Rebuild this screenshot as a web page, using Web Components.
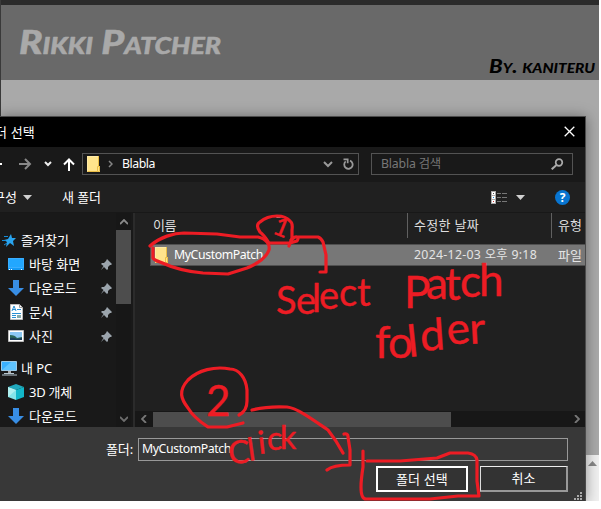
<!DOCTYPE html>
<html lang="ko"><head><meta charset="utf-8"><title>Rikki Patcher</title>
<style>
html,body{margin:0;width:601px;height:509px;overflow:hidden;background:#fff}
body{font:13px/18px "Noto Sans","Noto Sans CJK KR",sans-serif;color:#fff}
</style></head><body><patcher-page></patcher-page>
<script>
const define=(name,html,after)=>customElements.define(name,class extends HTMLElement{
  connectedCallback(){
    if(this.shadowRoot)return;
    const t=document.createElement('template');t.innerHTML=html;
    this.attachShadow({mode:'open'}).append(t.content.cloneNode(true));
    if(after)after(this,this.shadowRoot);
  }
});

// Single-line label; "w" is the advance width its letters are spaced to fill.
define('ui-label','<style>:host{display:inline-block;white-space:nowrap;flex:none;padding-bottom:1px}:host([latin]){font-size:12.3px}</style><span><slot></slot></span>',(el,r)=>{
  const w=+el.getAttribute('w');if(!w)return;
  const nat=r.querySelector('span').getBoundingClientRect().width;
  el.style.letterSpacing=((w-nat)/el.textContent.length)+'px';
  el.style.width=w+'px';
});

const icons={
 folder:[13,16,'<path d="M0 0h12v10h1v6H0z" fill="#ffe48c"/><path d="M0 .5h12M.5 0v16" stroke="#ffeaa6" fill="none"/><path d="M.5 15.5h10v-5h2v5h-2M11.5 0v10" stroke="#e9bd46" fill="none"/>'],
 left:[12,12,'<path d="M12 6H1M6 1 1 6l5 5" fill="none" stroke="#fff" stroke-width="2"/>'],
 right:[13,12,'<path d="M0 6h11M6 1l5 5-5 5" fill="none" stroke="#888" stroke-width="2"/>'],
 down:[8,6,'<path d="M1 1l3 3 3-3" fill="none" stroke="#eee" stroke-width="2"/>'],
 downGrey:[10,7,'<path d="M1 1l4 4 4-4" fill="none" stroke="#999" stroke-width="2"/>'],
 up:[12,13,'<path d="M6 13V2M1 6.500 6 1.500l5 5" fill="none" stroke="#fff" stroke-width="2"/>'],
 crumb:[5,8,'<path d="M1 1l3 3-3 3" fill="none" stroke="#858585" stroke-width="1.500"/>'],
 refresh:[11,12,'<path d="M7 2.700a4.200 4.200 0 1 1-4.300.7" fill="none" stroke="#999" stroke-width="1.800"/><path d="M.5 1.300h4.200v4" fill="none" stroke="#999" stroke-width="1.700"/>'],
 search:[13,12,'<circle cx="8" cy="4.500" r="3.300" fill="none" stroke="#aaa" stroke-width="1.700"/><path d="M5.500 7 .7 11.300" stroke="#aaa" stroke-width="2"/>'],
 close:[11,11,'<path d="M.7.700l9.600 9.600m0-9.600L.7 10.300" stroke="#fff" stroke-width="1.300"/>'],
 tri:[9,5,'<path d="M0 0h9L4.500 5z" fill="#d0d0d0"/>'],
 view:[16,13,'<path d="M0 0h5v13H0z" fill="#aaa"/><path d="M1 1h3v3H1zm0 4h3v3H1zm0 4h3v3H1z" fill="#fff"/><path d="M2 2h1v1H2z" fill="#555"/><path d="M2 6h1v1H2z" fill="#198ddd"/><path d="M2 10h1v1H2z" fill="#c33"/><path d="M6 2.500h4m1 0h5M6 6.500h4m1 0h5M6 10.500h4m1 0h5" stroke="#777"/>'],
 star:[14,13,'<path d="M9 0l1 4h4l-3 3 1 5-4-3-4 4 1-5-3-2 4-1z" fill="#29a4ef"/><path d="M2 2.500h4M0 6.500h4M2 11l3-2" stroke="#168bd5"/>'],
 desktop:[16,12,'<path d="M0 0h16v12H0z" fill="#1499f4"/><path d="M.5.500h15v9H.5z" fill="#22a7ff" stroke="#3aaeff"/><path d="M1 11.500h1m1 0h1m9 0h1" stroke="#fff"/>'],
 download:[16,16,'<path d="M5 0h6v8h5l-8 8-8-8h5z" fill="#388ee5"/>'],
 doc:[13,16,'<path d="M.5.500h9l3 3v12H.5z" fill="#fff" stroke="#bbb"/><path d="M9.500.500v3h3" fill="none" stroke="#999"/><path d="M2 7l2-5 2 5M2 5.500h4M7 5.500h4M2 9.500h9M2 11.500h4M2 13.500h4" stroke="#2a8fd3" fill="none"/><path d="M7 11h4v3H7z" fill="#8aa"/>'],
 photo:[16,12,'<path d="M.5.500h15v11H.5z" fill="#fff" stroke="#bbb"/><path d="M2 2h12v8H2z" fill="#8bc8f4"/><path d="M2 5q5 0 7 3l5-1v3H2z" fill="#276455"/><path d="M2 8q4-1 7 1l5-1v2H2z" fill="#1a3c58"/>'],
 pc:[17,15,'<path d="M.5.500h15v9H.5z" fill="#39b0ff" stroke="#9dc9e6"/><path d="M1 9L10 1h5v8z" fill="#5fc4ff"/><path d="M7 10h3v2H7z" fill="#aaa"/><path d="M3 12.500h10M1 14h15" stroke="#b5c6d0"/>'],
 cube:[16,16,'<path d="M0 3l8-3 8 3-8 3z" fill="#20a9bd"/><path d="M0 3l8 3v10l-8-3z" fill="#83e5ea"/><path d="M8 6l8-3v10l-8 3z" fill="#12b7c9"/><path d="M8 6L0 13V3z" fill="#b0f0f0"/>'],
 pin:[11,11,'<path d="M6 0l5 5-1 1H9L7 8v2L6 11 3 8l-3 3 2.500-4L0 5l1-1h2l2-2z" fill="#9ba4ac"/>'],
 sup:[8,6,'<path d="M0 5l4-4 4 4" fill="none" stroke="#8a8a8a" stroke-width="1.800"/>'],
 sdn:[8,6,'<path d="M0 1l4 4 4-4" fill="none" stroke="#6e6e6e" stroke-width="1.800"/>'],
 sl:[6,8,'<path d="M5 0L1 4l4 4" fill="none" stroke="#777" stroke-width="1.800"/>'],
 sr:[6,8,'<path d="M1 0l4 4-4 4" fill="none" stroke="#777" stroke-width="1.800"/>']
};
define('ui-icon','<style>:host{display:inline-flex;flex:none}svg{display:block}</style>',(el,r)=>{
  const [w,h,b]=icons[el.getAttribute('name')];
  r.innerHTML+=`<svg width="${w}" height="${h}" viewBox="0 0 ${w} ${h}">${b}</svg>`;
});

define('page-header',`<style>:host{display:flex;box-sizing:border-box;height:80px;border-top:5px solid #2b2b2b;background:#696969;justify-content:space-between}
svg{display:block;height:75px;overflow:visible}text{font-family:Lato,sans-serif;font-weight:900;font-style:italic;font-variant:small-caps;stroke-linejoin:round}</style>
<svg width="240"><text x="18" y="49" textLength="202" lengthAdjust="spacingAndGlyphs" font-size="32" fill="#a9a9a9" stroke="#a9a9a9" stroke-width=".5">Rikki Patcher</text></svg>
<svg width="115"><text x="5" y="68" textLength="106" lengthAdjust="spacingAndGlyphs" font-size="18.500" fill="#000">By. kaniteru</text></svg>`);

define('title-bar',`<style>:host{display:flex;height:30px;background:#000;align-items:center;justify-content:space-between;padding:0 10px 0 0}ui-label{margin-left:-5px}ui-icon{margin-bottom:2px}</style><ui-label w="40">더 선택</ui-label><ui-icon name="close"></ui-icon>`);

define('nav-bar',`<style>:host{display:flex;box-sizing:border-box;height:35px;padding:6px 12px 7px 0;background:#191919;align-items:center}
.a{margin-left:-10px}.b{margin-left:17px}.c{margin:0 11px 0 12px}
.box{box-sizing:border-box;height:22px;border:1px solid #535353;display:flex;align-items:center}
.path{width:277px;margin-left:7px;padding:0 4px}.path ui-label{margin-left:9px}.crumb{margin-left:8px}.dd{margin-left:auto}.rf{margin-left:10px}
.find{width:202px;margin-left:12px;color:#777;padding:0 8px 0 9px;justify-content:space-between}</style>
<ui-icon class="a" name="left"></ui-icon><ui-icon class="b" name="right"></ui-icon><ui-icon class="c" name="down"></ui-icon><ui-icon name="up"></ui-icon>
<div class="box path"><ui-icon name="folder"></ui-icon><ui-icon class="crumb" name="crumb"></ui-icon><ui-label latin w="33">Blabla</ui-label><ui-icon class="dd" name="downGrey"></ui-icon><ui-icon class="rf" name="refresh"></ui-icon></div>
<div class="box find"><ui-label latin w="60">Blabla 검색</ui-label><ui-icon name="search"></ui-icon></div>`);

define('tool-bar',`<style>:host{display:flex;box-sizing:border-box;height:31px;background:#202020;border-bottom:1px solid #181818;align-items:center;padding-right:15px}
.o{margin-left:-7px}.t{margin-left:6px}.n{margin-left:30px}.v{margin-left:auto}.u{margin-left:9px;margin-right:30px}.h{width:15px;height:15px;border-radius:50%;background:#0875d1;text-align:center;font:bold 12px/15px "Open Sans",sans-serif}</style>
<ui-label class="o" w="24">구성</ui-label><ui-icon class="t" name="tri"></ui-icon><ui-label class="n" w="39">새 폴더</ui-label><ui-icon class="v" name="view"></ui-icon><ui-icon class="u" name="tri"></ui-icon><span class="h">?</span>`);

define('tree-item',`<style>:host{display:flex;height:24px;align-items:center;padding-left:8px;gap:5px}:host([root]){padding-left:1px;gap:4px}.i{width:16px;display:flex;justify-content:center}.p{margin-left:auto;margin-right:4px}</style><span class="i"></span><ui-label></ui-label>`,(el,r)=>{
  r.querySelector('.i').innerHTML=`<ui-icon name="${el.getAttribute('icon')}"></ui-icon>`;
  const l=document.createElement('ui-label');l.setAttribute('w',el.getAttribute('w'));l.textContent=el.getAttribute('label');
  r.querySelector('ui-label').replaceWith(l);
  if(el.hasAttribute('pinned'))r.innerHTML+='<ui-icon class="p" name="pin"></ui-icon>';
});

define('side-bar',`<style>:host{display:flex;width:133px;height:214px;background:#191919;border-right:2px solid #2b2b2b;box-sizing:content-box;overflow:hidden}
.tree{width:116px;padding-top:15px}.gap{height:8px}.sb{width:15px;background:#171717;display:flex;flex-direction:column;align-items:center;padding:6px 0 5px;box-sizing:border-box}.th{width:15px;height:74px;background:#4d4d4d;margin-top:5px}.d{margin-top:auto}</style>
<div class="tree"><tree-item root icon="star" label="즐겨찾기" w="48"></tree-item><tree-item pinned icon="desktop" label="바탕 화면" w="52"></tree-item><tree-item pinned icon="download" label="다운로드" w="48"></tree-item><tree-item pinned icon="doc" label="문서" w="24"></tree-item><tree-item pinned icon="photo" label="사진" w="24"></tree-item><div class="gap"></div><tree-item root icon="pc" label="내 PC" w="31"></tree-item><tree-item icon="cube" label="3D 개체" w="43"></tree-item><tree-item icon="download" label="다운로드" w="48"></tree-item></div>
<div class="sb"><ui-icon name="sup"></ui-icon><div class="th"></div><ui-icon class="d" name="sdn"></ui-icon></div>`);

define('file-list',`<style>:host{display:flex;flex-direction:column;flex:1;background:#202020;min-width:0}
.g{display:grid;grid-template-columns:272px 144px 1fr;align-items:center}.h{height:25px;color:#dedede}.h div{height:25px;display:flex;align-items:center;padding-left:6px;border-left:1px solid #606060}.h div:first-child{border:0;padding-left:18px}
.sort{margin:-19px 0 0 100px}
.r{height:22px;box-sizing:border-box;background:#777;border:solid #505050;border-width:1px 0 1px 1px;margin:6px 0 0 15px;grid-template-columns:257px 144px 1fr;color:#e4e4e4}.r div{display:flex;align-items:center;padding-left:6px}.r div:first-child{padding-left:4px;gap:6px;color:#fff}
.s{height:16px;background:#171717;margin-top:auto;display:flex;align-items:center;padding:0 5px 0 6px;justify-content:space-between;flex:none}.th{height:15px;width:298px;background:#4d4d4d;margin:0 auto 0 6px}</style>
<div class="g h"><div><ui-label w="23">이름</ui-label><svg class="sort" width="5" height="3"><path d="M2.500 0L5 3H0z" fill="#aaa"/></svg></div><div><ui-label w="65">수정한 날짜</ui-label></div><div><ui-label w="24">유형</ui-label></div></div>
<div class="g r"><div><ui-icon name="folder"></ui-icon><ui-label latin w="89">MyCustomPatch</ui-label></div><div><ui-label latin w="123">2024-12-03 오후 9:18</ui-label></div><div><ui-label w="24">파일</ui-label></div></div>
<div class="s"><ui-icon name="sl"></ui-icon><div class="th"></div><ui-icon name="sr"></ui-icon></div>`);

define('dialog-button',`<style>:host{display:flex;box-sizing:border-box;height:26px;width:88px;border:2px solid #999;border-top:1px solid #eee;border-left:1px solid #ddd;background:#333;align-items:center;justify-content:center}:host([primary]){width:92px;border:2px solid #fff}</style><slot></slot>`);

define('dialog-footer',`<style>:host{display:flex;flex-direction:column;box-sizing:border-box;height:74px;background:#383838;padding:11px 17px 0 106px}
.f{display:flex;height:23px;align-items:center}.in{flex:1;height:23px;box-sizing:border-box;border:1px solid #999;margin-left:5px;display:flex;align-items:center;padding-left:3px}
.b{display:flex;justify-content:flex-end;gap:12px;padding-top:5px}</style>
<div class="f"><ui-label w="27">폴더:</ui-label><div class="in"><ui-label latin w="89">MyCustomPatch</ui-label></div></div>
<div class="b"><dialog-button primary><ui-label w="52">폴더 선택</ui-label></dialog-button><dialog-button><ui-label w="24">취소</ui-label></dialog-button></div>`);

define('folder-dialog',`<style>:host{position:absolute;left:0;top:116px;width:585px;display:block;border-top:1px solid #4b4b4b;border-right:1px solid #4b4b4b;box-shadow:0 1px 13px rgba(0,0,0,.4)}.m{display:flex;height:214px}.grip{position:absolute;right:3px;bottom:1px}</style>
<title-bar></title-bar><nav-bar></nav-bar><tool-bar></tool-bar><div class="m"><side-bar></side-bar><file-list></file-list></div><dialog-footer></dialog-footer>
<svg class="grip" width="8" height="8"><path d="M6 0h2v2H6zM3 3h2v2H3zm3 0h2v2H6zM0 6h2v2H0zm3 0h2v2H3zm3 0h2v2H6z" fill="#aaa"/></svg>`);

define('ink-notes',`<style>:host{position:absolute;inset:0;pointer-events:none}svg{display:block}path{fill:none;stroke:#ed1c24;stroke-width:3.2;stroke-linecap:round;stroke-linejoin:round}text{font-family:Lato,sans-serif;fill:#ed1c24;stroke:#ed1c24;stroke-width:.4;stroke-linejoin:round}</style>
<svg width="601" height="509" viewBox="0 0 601 509">
<path d="M150 246C160 237 174 233 184 233L217 234 240 237 258 237C267 239 270 245 269 250C266 258 259 263 247 268L228 274 203 273C191 272 173 268 160 262Q154 260 153 258V248"/>
<path d="M269 243Q264 235 260 232Q255 225 260 222Q267 216 277 216Q286 216 290 221Q293 223 292 230V238L289 246M269 243L290 243 297 241Q300 236 295 237L291 240M297 237H318Q321 238 323 242L326 255V272H320"/>
<path d="M239 415Q247 411 247 401V390C246 378 239 369 230 369C215 366 198 370 188 380C178 391 181 399 188 408C194 418 202 423 208 427H227L243 423"/>
<path d="M252 410Q267 406 287 407C297 408 312 419 328 430Q336 440 343 453M344 434Q348 433 348 437L350 450V465Q333 465 327 470"/>
<path d="M363 451V467Q361 480 361 487Q361 499 366 499H430L458 496H479L477 481V460Q476 454 468 453H450L437 458 400 461H367"/>
<text font-size="26" x="274" y="236" transform="rotate(22 281 228)">1</text>
<text font-size="42" x="206" y="416">2</text>
<text font-size="38" x="276 296 312 319 339 357" y="314 314 312 309 306 306">Select</text>
<text font-size="44" x="404 426 445 460 479" y="308 299 300 297 296">Patch</text>
<text font-size="44" x="375 388 409 421 448 470" y="358 358 357 351 345 344" rotate="0 0 -6 -4 -6 -3">folder</text>
<text font-size="32" x="229 249 259 267 280" y="464 461 454 450 449" rotate="-4 -8 -6 0 0">Click</text>
</svg>`);

define('patcher-page',`<style>:host{display:block;position:relative;width:601px;height:509px;overflow:hidden}.page{box-sizing:border-box;width:599px;height:501px;background:#a9a9a9;border-left:1px solid #393939;position:relative;overflow:hidden;display:flex;flex-direction:column}.scroll{margin:auto 0 0 auto;width:13px;height:46px;background:#f0f0f0;display:flex;justify-content:center;padding-top:6px;box-sizing:border-box}.clip{position:absolute;inset:0 2px 8px 0;overflow:hidden}</style>
<div class="page"><page-header></page-header><div class="scroll"><svg width="9" height="5"><path d="M4.500 0L9 5H0z" fill="#888"/></svg></div></div>
<div class="clip"><folder-dialog></folder-dialog></div><ink-notes></ink-notes>`);
</script></body></html>
